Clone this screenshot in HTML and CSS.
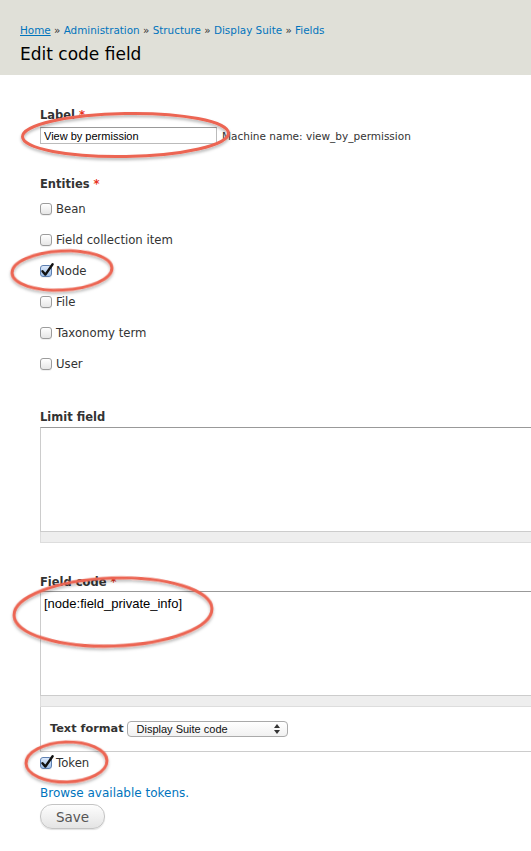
FILE: index.html
```html
<!DOCTYPE html>
<html lang="en">
<head>
<meta charset="utf-8">
<title>Edit code field</title>
<link rel="stylesheet" href="styles.css">
</head>
<body>
<header class="page-header">
  <div class="breadcrumb"><a class="home" href="#">Home</a> » <a href="#">Administration</a> » <a href="#">Structure</a> » <a href="#">Display Suite</a> » <a href="#">Fields</a></div>
  <h1>Edit code field</h1>
</header>
<main class="content">
  <div class="form-item label-item">
    <label class="field-title">Label <span class="req">*</span></label>
    <div class="label-row">
      <input class="text-input" type="text" value="View by permission">
      <span class="machine">Machine name: view_by_permission</span>
    </div>
  </div>

  <div class="form-item entities-item">
    <label class="field-title">Entities <span class="req">*</span></label>
    <div class="checks">
      <div class="check-row"><span class="cb"></span>Bean</div>
      <div class="check-row"><span class="cb"></span>Field collection item</div>
      <div class="check-row"><span class="cb checked"><svg class="tick" viewBox="0 0 14 14" width="14" height="14"><path d="M2.5 7.2 L5.4 10.6 L12.6 0.2"/></svg></span>Node</div>
      <div class="check-row"><span class="cb"></span>File</div>
      <div class="check-row"><span class="cb"></span>Taxonomy term</div>
      <div class="check-row"><span class="cb"></span>User</div>
    </div>
  </div>

  <div class="form-item limit-item">
    <label class="field-title">Limit field</label>
    <textarea class="area limit-area"></textarea>
    <div class="grippie"></div>
  </div>

  <div class="form-item code-item">
    <label class="field-title">Field code <span class="req">*</span></label>
    <textarea class="area code-area">[node:field_private_info]</textarea>
    <div class="grippie"></div>
    <div class="filter-wrapper">
      <span class="filter-label">Text format</span>
      <div class="select">
        <span>Display Suite code</span>
        <svg class="arrows" viewBox="0 0 6 10" width="6" height="10"><path d="M3 0 L6 4 L0 4 Z M0 6 L6 6 L3 10 Z"/></svg>
      </div>
    </div>
  </div>

  <div class="check-row token-row"><span class="cb checked"><svg class="tick" viewBox="0 0 14 14" width="14" height="14"><path d="M2.5 7.2 L5.4 10.6 L12.6 0.2"/></svg></span>Token</div>
  <a class="browse" href="#">Browse available tokens.</a>
  <div class="actions"><button class="save" type="button">Save</button></div>
</main>

<svg class="marks" viewBox="0 0 531 851" width="531" height="851">
  <defs>
    <filter id="sh" x="-20%" y="-40%" width="140%" height="180%">
      <feDropShadow dx="0" dy="2" stdDeviation="1.5" flood-color="#000" flood-opacity="0.3"/>
    </filter>
  </defs>
  <g filter="url(#sh)">
    <ellipse cx="125.5" cy="135" rx="103" ry="21.5" transform="rotate(-1 125.5 135)"/>
    <ellipse cx="62" cy="270.5" rx="50" ry="19.5" transform="rotate(-3 62 270.5)"/>
    <ellipse cx="113" cy="612" rx="99" ry="34" transform="rotate(-2 113 612)"/>
    <ellipse cx="66.5" cy="762" rx="40.5" ry="20" transform="rotate(-2 66.5 762)"/>
  </g>
</svg>
</body>
</html>
```
FILE: styles.css
```css
html, body {
  margin: 0;
  padding: 0;
}
body {
  position: relative;
  width: 531px;
  height: 851px;
  overflow: hidden;
  background: #fff;
  color: #333;
  font-family: "DejaVu Sans", "Noto Sans", sans-serif;
}

.page-header {
  box-sizing: border-box;
  height: 75px;
  padding: 20px 20px 0;
  background: #e0e0d8;
}
.breadcrumb {
  font-size: 10.4px;
  line-height: 20px;
  color: #333;
}
.breadcrumb a {
  color: #0074bd;
  text-decoration: none;
}
.breadcrumb a.home {
  text-decoration: underline;
}
.page-header h1 {
  margin: 2px 0 0;
  font-size: 17px;
  font-weight: normal;
  line-height: 24px;
  color: #000;
}

.content {
  padding-left: 40px;
}
.field-title {
  display: block;
  font-size: 11.5px;
  font-weight: bold;
  line-height: 16px;
  color: #333;
}
.req {
  color: #e8321e;
}

.label-item {
  margin-top: 32px;
}
.label-row {
  display: flex;
  align-items: center;
  margin-top: 4px;
}
.text-input {
  box-sizing: border-box;
  width: 177px;
  height: 17px;
  margin: 0;
  padding: 0 3px;
  border: 1px solid #bbb;
  border-top-color: #999;
  border-radius: 0;
  font: 11px/15px "Liberation Sans", Arial, sans-serif;
  color: #000;
  outline: none;
}
.machine {
  margin-left: 5px;
  font-size: 10.5px;
  color: #333;
}

.entities-item {
  margin-top: 32px;
}
.checks {
  display: flex;
  flex-direction: column;
  gap: 15px;
  margin-top: 9px;
}
.check-row {
  display: flex;
  align-items: center;
  height: 16px;
  font-size: 11.7px;
  color: #333;
}
.cb {
  position: relative;
  box-sizing: border-box;
  flex: none;
  width: 12px;
  height: 12px;
  margin-right: 4px;
  border: 1px solid #9c9c9c;
  border-radius: 3px;
  background: linear-gradient(#ffffff, #e6e6e6);
  box-shadow: 0 1px 0 rgba(0,0,0,0.06);
}
.cb.checked {
  border-color: #5d7fb0;
  background: linear-gradient(#dce9fb, #9dbfea);
}
.tick {
  position: absolute;
  left: -1px;
  top: -2px;
  overflow: visible;
}
.tick path {
  fill: none;
  stroke: #111;
  stroke-width: 2.4;
  stroke-linecap: round;
  stroke-linejoin: round;
}

.limit-item {
  margin-top: 37px;
}
.limit-item .area {
  margin-top: 2px;
}
.area {
  display: block;
  box-sizing: border-box;
  width: 491px;
  height: 105px;
  margin: 0;
  padding: 4px 3px;
  border: 1px solid #ccc;
  border-top-color: #999;
  border-right: 0;
  border-radius: 0;
  resize: none;
  overflow: hidden;
  font: 13px/16px "Liberation Sans", Arial, sans-serif;
  color: #000;
  outline: none;
}
.grippie {
  box-sizing: border-box;
  width: 491px;
  height: 11px;
  background: #eee;
  border: 1px solid #ddd;
  border-top: 0;
  border-right: 0;
}

.code-item {
  margin-top: 31px;
}
.code-item .area {
  margin-top: 1px;
}
.filter-wrapper {
  box-sizing: border-box;
  display: flex;
  align-items: center;
  gap: 3px;
  width: 491px;
  padding: 14px 8px 14px 9px;
  border: 1px solid #ccc;
  border-top: 0;
  border-right: 0;
}
.filter-label {
  font-size: 11.3px;
  font-weight: bold;
  line-height: 16px;
  color: #333;
}
.select {
  position: relative;
  box-sizing: border-box;
  display: flex;
  align-items: center;
  width: 161px;
  height: 16px;
  padding-left: 9px;
  border: 1px solid #aaa;
  border-radius: 4px;
  background: linear-gradient(#ffffff, #f1f1f1);
  font: 11px/14px "Liberation Sans", Arial, sans-serif;
  color: #111;
}
.arrows {
  position: absolute;
  right: 7px;
  top: 2px;
  fill: #333;
}

.token-row {
  margin-top: 3px;
}
.browse {
  display: block;
  margin-top: 14px;
  font-size: 12px;
  line-height: 16px;
  color: #0074bd;
  text-decoration: none;
}
.actions {
  margin-top: 3px;
}
.save {
  box-sizing: border-box;
  width: 65px;
  height: 25px;
  margin: 0;
  padding: 0;
  border: 1px solid #c4c4c4;
  border-radius: 12px;
  background: linear-gradient(#fdfdfd, #e4e4e4);
  box-shadow: 0 1px 1px rgba(0,0,0,0.12);
  font-family: "DejaVu Sans", sans-serif;
  font-size: 13.5px;
  color: #555;
}

.marks {
  position: absolute;
  left: 0;
  top: 0;
  pointer-events: none;
}
.marks ellipse {
  fill: none;
  stroke: #ec6553;
  stroke-width: 3;
}
```
